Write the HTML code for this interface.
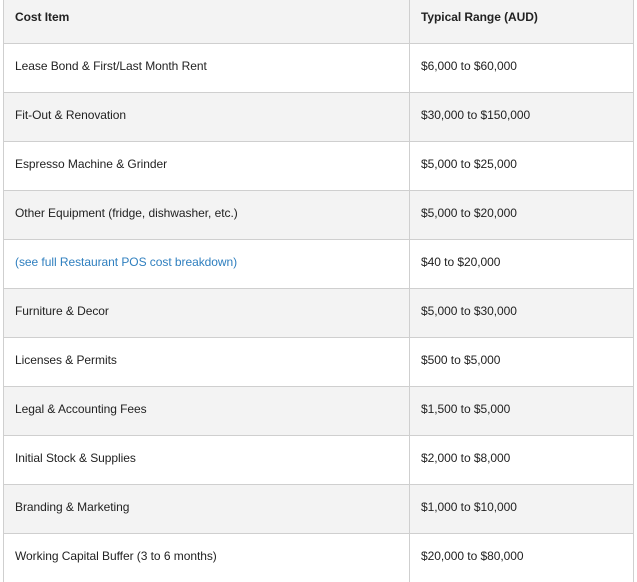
<!DOCTYPE html>
<html><head><style>
body{margin:0;background:#fff;font-family:"Liberation Sans",Arial,sans-serif;font-size:12px;color:#222;letter-spacing:-0.05px}
.t{position:absolute;left:3px;top:-5px;width:631px}
.r{display:flex;height:48px;border-top:1px solid #cfcfcf}
.r>div{display:flex;align-items:center;padding-left:11px;padding-bottom:5px;box-sizing:border-box}
.a{width:407px;border-left:1px solid #cfcfcf;border-right:1px solid #cfcfcf}
.b{flex:1;border-right:1px solid #cfcfcf}
.g{background:#f3f3f3}
.h{font-weight:bold}
a{color:#2f7fbf;text-decoration:none}
</style></head><body>
<div class="t">
<div class="r g h" style="height:48px;border-top:none"><div class="a">Cost Item</div><div class="b">Typical Range (AUD)</div></div>
<div class="r"><div class="a">Lease Bond &amp; First/Last Month Rent</div><div class="b">$6,000 to $60,000</div></div>
<div class="r g"><div class="a">Fit-Out &amp; Renovation</div><div class="b">$30,000 to $150,000</div></div>
<div class="r"><div class="a">Espresso Machine &amp; Grinder</div><div class="b">$5,000 to $25,000</div></div>
<div class="r g"><div class="a">Other Equipment (fridge, dishwasher, etc.)</div><div class="b">$5,000 to $20,000</div></div>
<div class="r"><div class="a"><a>(see full Restaurant POS cost breakdown)</a></div><div class="b">$40 to $20,000</div></div>
<div class="r g"><div class="a">Furniture &amp; Decor</div><div class="b">$5,000 to $30,000</div></div>
<div class="r"><div class="a">Licenses &amp; Permits</div><div class="b">$500 to $5,000</div></div>
<div class="r g"><div class="a">Legal &amp; Accounting Fees</div><div class="b">$1,500 to $5,000</div></div>
<div class="r"><div class="a">Initial Stock &amp; Supplies</div><div class="b">$2,000 to $8,000</div></div>
<div class="r g"><div class="a">Branding &amp; Marketing</div><div class="b">$1,000 to $10,000</div></div>
<div class="r"><div class="a">Working Capital Buffer (3 to 6 months)</div><div class="b">$20,000 to $80,000</div></div>
</div>
</body></html>
